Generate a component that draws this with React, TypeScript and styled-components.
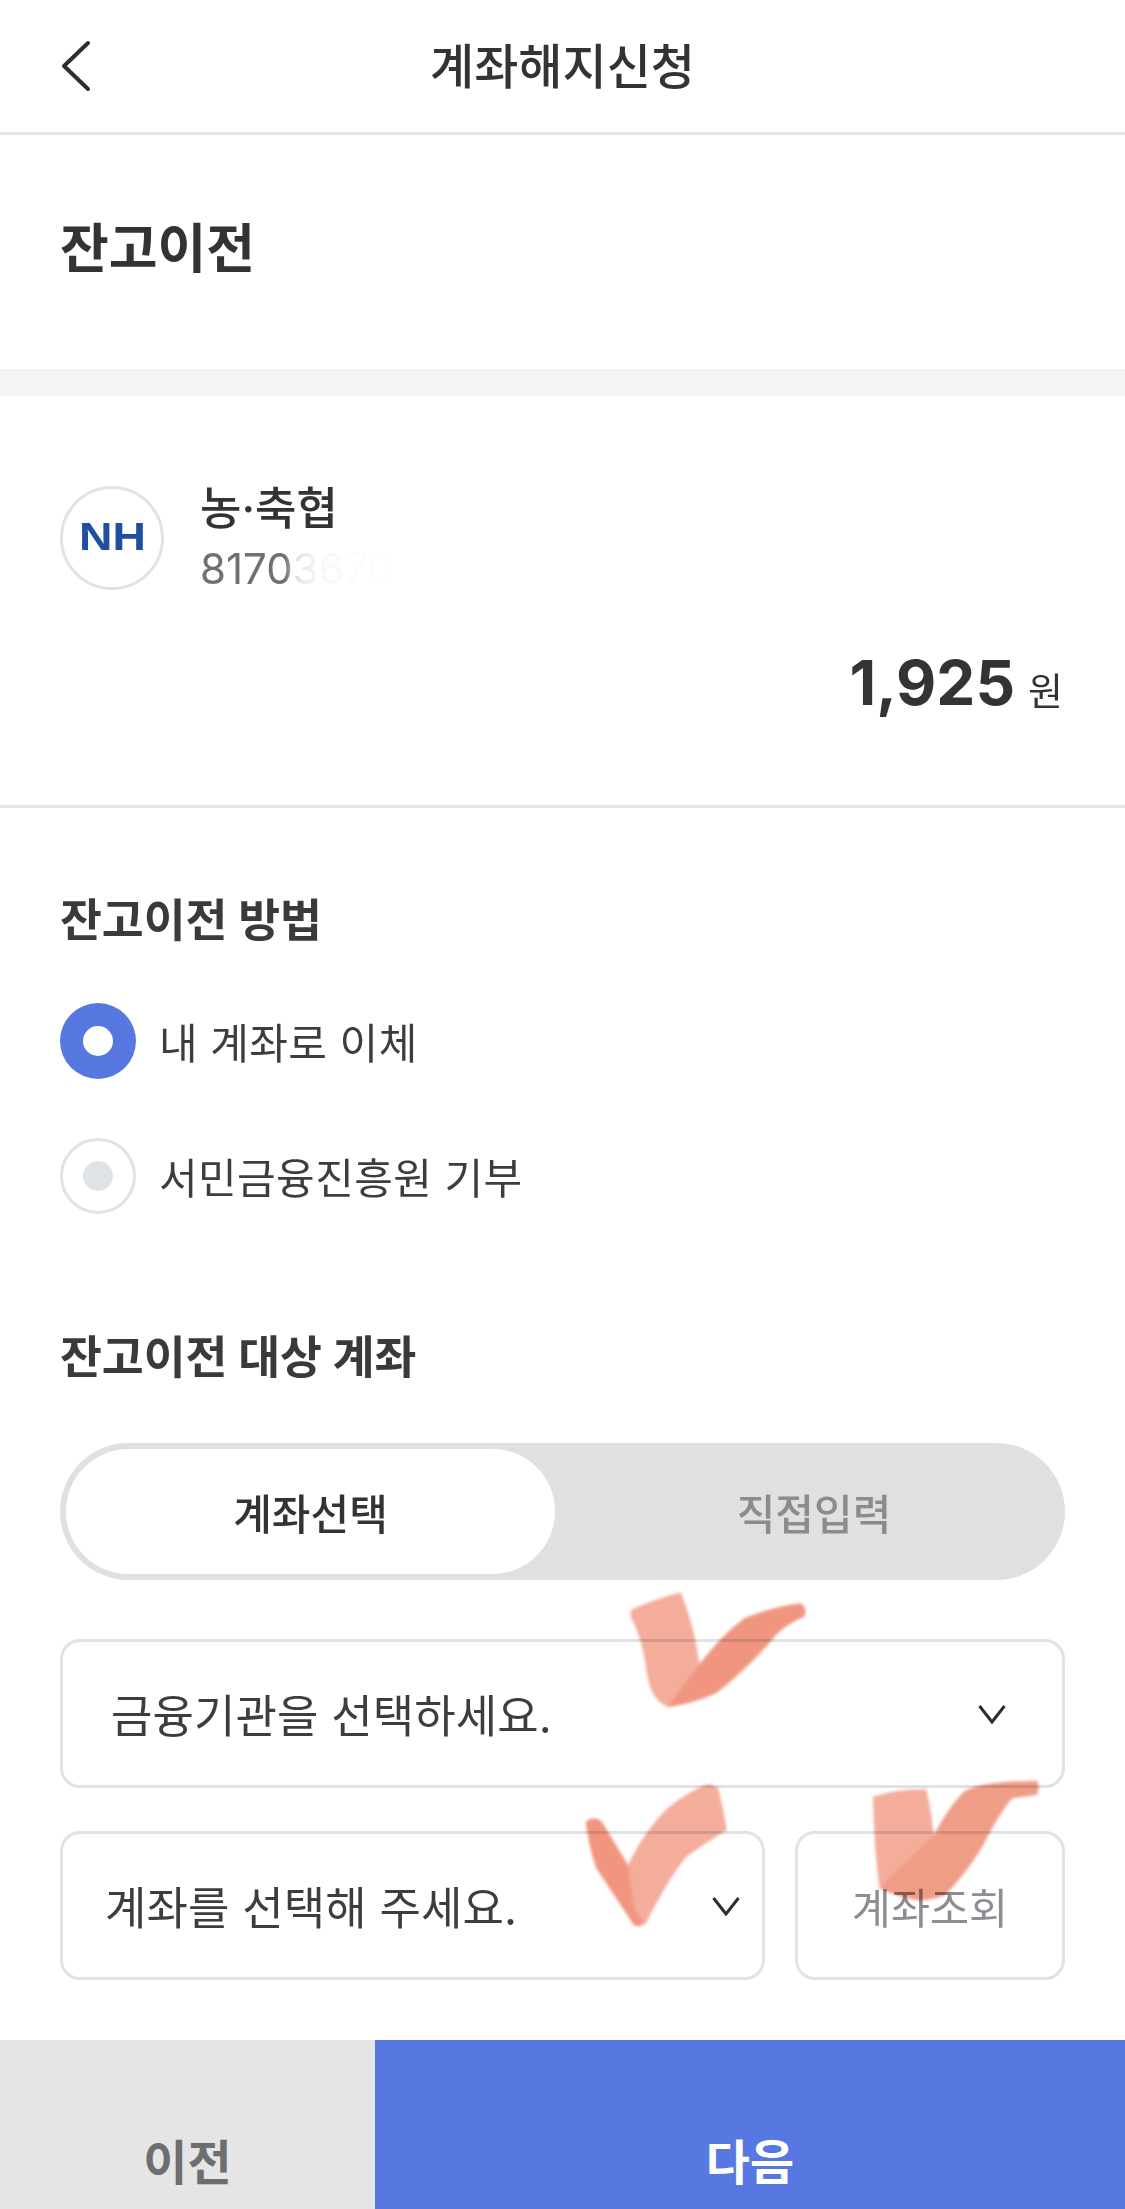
import styled, { createGlobalStyle } from "styled-components";

const GlobalStyle = createGlobalStyle`
  html, body {
    margin: 0;
    padding: 0;
    background: #fff;
  }
  * {
    box-sizing: border-box;
  }
`;

const Page = styled.div`
  position: relative;
  width: 1125px;
  height: 2209px;
  overflow: hidden;
  background: #fff;
  color: #333;
  font-family: "Inter", "Noto Sans CJK KR", sans-serif;
`;

const Header = styled.header`
  position: relative;
  height: 135px;
  border-bottom: 3px solid #e4e4e4;
  display: flex;
  align-items: center;
  justify-content: center;
  padding-bottom: 7px;
`;

const BackIcon = styled.svg`
  position: absolute;
  left: 60px;
  top: 38px;
`;

const HeaderTitle = styled.h1`
  margin: 0;
  font-size: 48px;
  font-weight: 500;
  color: #333;
`;

const PageTitleBar = styled.div`
  height: 261px;
  padding: 0 60px 14px;
  display: flex;
  align-items: center;
  border-bottom: 27px solid #f4f4f4;
`;

const PageTitle = styled.h2`
  margin: 0;
  font-size: 53px;
  font-weight: 700;
`;

const AccountCard = styled.section`
  height: 412px;
  padding: 85px 62px 0 60px;
  border-bottom: 3px solid #e4e4e4;
`;

const AccountRow = styled.div`
  display: flex;
  align-items: center;
  gap: 36px;
`;

const BankLogo = styled.div`
  width: 104px;
  height: 104px;
  border-radius: 50%;
  border: 3px solid #dfe2e7;
  display: flex;
  align-items: center;
  justify-content: center;
`;

const BankMark = styled.span`
  font-family: "Liberation Sans", sans-serif;
  font-size: 38px;
  font-weight: 700;
  color: #1f4fa0;
  transform: scaleX(1.22);
`;

const AccountInfo = styled.div`
  display: flex;
  flex-direction: column;
  gap: 7px;
`;

const BankName = styled.div`
  font-size: 45px;
  line-height: 56px;
  font-weight: 500;
  color: #333;
`;

const AccountNumber = styled.div`
  width: fit-content;
  font-size: 42px;
  line-height: 50px;
  color: #707070;
  white-space: nowrap;
  -webkit-mask-image: linear-gradient(90deg, #000 44%, rgba(0, 0, 0, 0.2) 50%, rgba(0, 0, 0, 0.05) 62%, transparent 100%);
  mask-image: linear-gradient(90deg, #000 44%, rgba(0, 0, 0, 0.2) 50%, rgba(0, 0, 0, 0.05) 62%, transparent 100%);
`;

const AmountRow = styled.div`
  margin-top: 51px;
  display: flex;
  justify-content: flex-end;
  align-items: baseline;
  gap: 13px;
`;

const Amount = styled.span`
  font-size: 62px;
  font-weight: 700;
  line-height: 76px;
`;

const AmountUnit = styled.span`
  font-size: 38px;
  color: #333;
`;

const SectionTitle = styled.h3<{ $top: number }>`
  margin: ${props => props.$top}px 0 0;
  font-size: 45.5px;
  line-height: 60px;
  font-weight: 700;
  color: #3a3a3a;
`;

const Body = styled.div`
  padding: 0 60px;
`;

const RadioList = styled.div`
  margin-top: 52px;
  display: flex;
  flex-direction: column;
  gap: 60px;
`;

const RadioRow = styled.div`
  display: flex;
  align-items: center;
  gap: 23px;
  height: 75px;
`;

const RadioMark = styled.span<{ $checked?: boolean }>`
  width: 76px;
  height: 76px;
  border-radius: 50%;
  background: ${props => (props.$checked ? "#5778e0" : "#fff")};
  border: ${props => (props.$checked ? "0" : "3px solid #dfe2e7")};
  display: flex;
  align-items: center;
  justify-content: center;

  &::after {
    content: "";
    width: 30px;
    height: 30px;
    border-radius: 50%;
    background: ${props => (props.$checked ? "#fff" : "#dfe2e7")};
  }
`;

const RadioLabel = styled.span`
  font-size: 42px;
  letter-spacing: 0.4px;
  color: #3d3d3d;
`;

const Toggle = styled.div`
  margin-top: 55px;
  height: 137px;
  border-radius: 69px;
  background: #e0e0e0;
  padding: 6px;
  display: flex;
`;

const ToggleOption = styled.div<{ $active?: boolean }>`
  width: ${props => (props.$active ? "489px" : "504px")};
  padding-left: ${props => (props.$active ? "0" : "14px")};
  border-radius: 63px;
  background: ${props => (props.$active ? "#fff" : "transparent")};
  color: ${props => (props.$active ? "#333" : "#8c8c8c")};
  font-size: 42px;
  font-weight: 500;
  display: flex;
  align-items: center;
  justify-content: center;
`;

const SelectBox = styled.div<{ $width: number; $inset: number; $end: number }>`
  width: ${props => props.$width}px;
  height: 149px;
  border: 3px solid #dfe2e7;
  border-radius: 20px;
  padding: 0 ${props => props.$end}px 0 ${props => props.$inset}px;
  display: flex;
  align-items: center;
  justify-content: space-between;
  font-size: 45px;
  letter-spacing: 0.1px;
  color: #3d3d3d;
`;

const SelectColumn = styled.div`
  margin-top: 59px;
  display: flex;
  flex-direction: column;
  gap: 43px;
`;

const SelectRow = styled.div`
  display: flex;
  gap: 30px;
`;

const LookupButton = styled.div`
  width: 270px;
  height: 149px;
  border: 3px solid #dfe2e7;
  border-radius: 20px;
  display: flex;
  align-items: center;
  justify-content: center;
  font-size: 42.5px;
  color: #8b8e92;
`;

const Footer = styled.footer`
  position: absolute;
  left: 0;
  right: 0;
  bottom: 0;
  height: 169px;
  display: flex;
`;

const FooterButton = styled.div<{ $primary?: boolean }>`
  width: ${props => (props.$primary ? "750px" : "375px")};
  background: ${props => (props.$primary ? "#5778e0" : "#e5e5e5")};
  color: ${props => (props.$primary ? "#fff" : "#6e6e6e")};
  font-size: 48px;
  font-weight: 700;
  display: flex;
  justify-content: center;
  padding-top: 93px;
  line-height: 60px;
`;

const CheckMarks = styled.svg`
  position: absolute;
  left: 540px;
  top: 1560px;
  mix-blend-mode: multiply;
  pointer-events: none;
`;

const Chevron = () => (
  <svg width="28" height="20" viewBox="0 0 28 20" fill="none">
    <path d="M1.5 2 L14 18 L26.5 2" stroke="#2e2e2e" strokeWidth="3" />
  </svg>
);

const App = (): JSX.Element => {
  return (
    <Page>
      <GlobalStyle />
      <Header>
        <BackIcon width="32" height="56" viewBox="0 0 32 56" fill="none">
          <path d="M28 5 L4 28 L28 51" stroke="#2e2e2e" strokeWidth="4" strokeLinecap="round" strokeLinejoin="round" />
        </BackIcon>
        <HeaderTitle>계좌해지신청</HeaderTitle>
      </Header>
      <PageTitleBar>
        <PageTitle>잔고이전</PageTitle>
      </PageTitleBar>
      <AccountCard>
        <AccountRow>
          <BankLogo>
            <BankMark>NH</BankMark>
          </BankLogo>
          <AccountInfo>
            <BankName>농·축협</BankName>
            <AccountNumber>81703670</AccountNumber>
          </AccountInfo>
        </AccountRow>
        <AmountRow>
          <Amount>1,925</Amount>
          <AmountUnit>원</AmountUnit>
        </AmountRow>
      </AccountCard>
      <Body>
        <SectionTitle $top={83}>잔고이전 방법</SectionTitle>
        <RadioList>
          <RadioRow>
            <RadioMark $checked />
            <RadioLabel>내 계좌로 이체</RadioLabel>
          </RadioRow>
          <RadioRow>
            <RadioMark />
            <RadioLabel>서민금융진흥원 기부</RadioLabel>
          </RadioRow>
        </RadioList>
        <SectionTitle $top={115}>잔고이전 대상 계좌</SectionTitle>
        <Toggle>
          <ToggleOption $active>계좌선택</ToggleOption>
          <ToggleOption>직접입력</ToggleOption>
        </Toggle>
        <SelectColumn>
          <SelectBox $width={1005} $inset={48} $end={56}>
            금융기관을 선택하세요.
            <Chevron />
          </SelectBox>
          <SelectRow>
            <SelectBox $width={705} $inset={42} $end={22}>
              계좌를 선택해 주세요.
              <Chevron />
            </SelectBox>
            <LookupButton>계좌조회</LookupButton>
          </SelectRow>
        </SelectColumn>
      </Body>
      <CheckMarks width="585" height="440" viewBox="0 0 1560 1320" preserveAspectRatio="none">
        <defs>
          <filter id="soft" x="-10%" y="-10%" width="120%" height="120%">
            <feGaussianBlur stdDeviation="4" />
          </filter>
        </defs>
        <g filter="url(#soft)">
          <path d="M242 150 Q300 120 375 97 Q410 190 425 310 L440 370 L340 440 Q295 420 285 340 Q275 240 242 170 Z" fill="#f4ac9b" />
          <path d="M340 440 Q380 380 430 305 Q490 220 545 175 Q620 140 695 130 Q715 145 705 170 Q660 190 630 225 Q560 320 470 400 Q410 430 350 440 Z" fill="#f09680" />
          <path d="M122 785 Q145 765 165 785 L235 915 Q255 1000 280 1090 Q265 1105 250 1095 L150 925 Q130 860 122 785 Z" fill="#f09680" />
          <path d="M235 915 Q280 810 340 745 Q400 690 450 672 L475 685 Q490 750 498 810 Q440 850 390 890 Q340 960 280 1095 L250 1040 Z" fill="#f4ac9b" />
          <path d="M888 710 Q960 685 1030 688 Q1045 760 1050 830 L1050 1000 L960 1000 L905 985 Q890 850 888 710 Z" fill="#f4ac9b" />
          <path d="M905 985 Q980 900 1050 825 Q1090 740 1130 695 Q1170 665 1325 662 Q1335 680 1325 705 L1260 715 Q1230 750 1180 860 Q1130 950 1080 1005 Q1040 1025 1000 1020 Q950 1010 905 985 Z" fill="#f09d88" />
        </g>
      </CheckMarks>
      <Footer>
        <FooterButton>이전</FooterButton>
        <FooterButton $primary>다음</FooterButton>
      </Footer>
    </Page>
  );
};

export default App;
